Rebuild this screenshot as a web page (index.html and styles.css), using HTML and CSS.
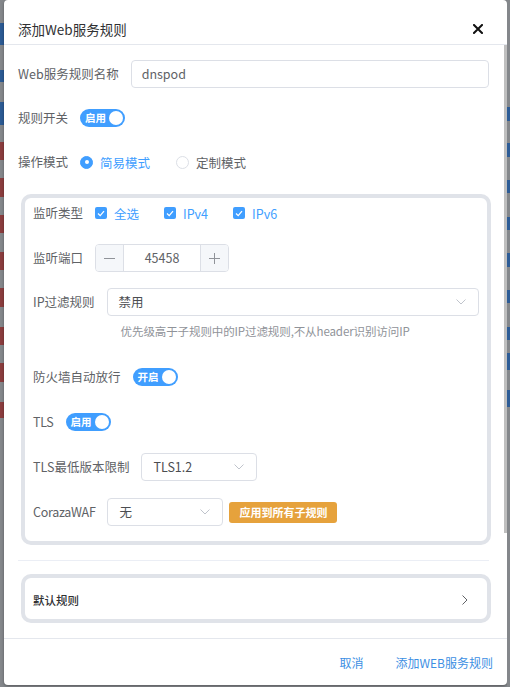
FILE: index.html
```html
<!DOCTYPE html>
<html lang="zh-CN">
<head>
<meta charset="utf-8">
<title>添加Web服务规则</title>
<link rel="stylesheet" href="styles.css">
</head>
<body>
<div class="page">
  <div class="bg-left"></div>
  <div class="dialog">
    <div class="dlg-header">
      <span class="dlg-title">添加Web服务规则</span>
      <span class="close" aria-label="close">
        <svg width="10" height="10" viewBox="0 0 10 10"><path d="M1 1 L9 9 M9 1 L1 9" stroke="#111" stroke-width="2" stroke-linecap="square" fill="none"/></svg>
      </span>
    </div>
    <div class="body-wrap">
      <div class="dlg-body">
        <div class="form-item">
          <span class="lbl">Web服务规则名称</span>
          <div class="input">dnspod</div>
        </div>
        <div class="form-item">
          <span class="lbl">规则开关</span>
          <span class="switch"><span class="sw-text">启用</span><span class="knob"></span></span>
        </div>
        <div class="form-item">
          <span class="lbl">操作模式</span>
          <span class="radio checked"><span class="r-dot"></span><span class="r-text">简易模式</span></span>
          <span class="radio"><span class="r-dot"></span><span class="r-text">定制模式</span></span>
        </div>

        <div class="card">
          <div class="c-item">
            <span class="lbl">监听类型</span>
            <span class="cbx"><span class="box"><svg width="8" height="7" viewBox="0 0 8 7"><path d="M1 3.5 L3.2 5.6 L7 1.2" stroke="#fff" stroke-width="1.3" fill="none"/></svg></span><span class="cbx-text">全选</span></span>
            <span class="cbx"><span class="box"><svg width="8" height="7" viewBox="0 0 8 7"><path d="M1 3.5 L3.2 5.6 L7 1.2" stroke="#fff" stroke-width="1.3" fill="none"/></svg></span><span class="cbx-text">IPv4</span></span>
            <span class="cbx"><span class="box"><svg width="8" height="7" viewBox="0 0 8 7"><path d="M1 3.5 L3.2 5.6 L7 1.2" stroke="#fff" stroke-width="1.3" fill="none"/></svg></span><span class="cbx-text">IPv6</span></span>
          </div>
          <div class="c-item">
            <span class="lbl">监听端口</span>
            <div class="num">
              <span class="num-btn minus"><svg width="11" height="11" viewBox="0 0 11 11"><path d="M0 5.5 H11" stroke="#909399" stroke-width="1"/></svg></span>
              <span class="num-val">45458</span>
              <span class="num-btn plus"><svg width="11" height="11" viewBox="0 0 11 11"><path d="M0 5.5 H11 M5.5 0 V11" stroke="#909399" stroke-width="1"/></svg></span>
            </div>
          </div>
          <div class="c-item ip">
            <span class="lbl">IP过滤规则</span>
            <div class="ctrl-col">
              <div class="select wide"><span class="sel-val">禁用</span><svg class="chev" width="10" height="6" viewBox="0 0 10 6"><path d="M0.5 0.5 L5 5 L9.5 0.5" stroke="#c0c4cc" stroke-width="1" fill="none"/></svg></div>
              <div class="hint">优先级高于子规则中的IP过滤规则,不从header识别访问IP</div>
            </div>
          </div>
          <div class="c-item fw">
            <span class="lbl">防火墙自动放行</span>
            <span class="switch"><span class="sw-text">开启</span><span class="knob"></span></span>
          </div>
          <div class="c-item">
            <span class="lbl lat">TLS</span>
            <span class="switch"><span class="sw-text">启用</span><span class="knob"></span></span>
          </div>
          <div class="c-item">
            <span class="lbl">TLS最低版本限制</span>
            <div class="select short"><span class="sel-val">TLS1.2</span><svg class="chev" width="10" height="6" viewBox="0 0 10 6"><path d="M0.5 0.5 L5 5 L9.5 0.5" stroke="#c0c4cc" stroke-width="1" fill="none"/></svg></div>
          </div>
          <div class="c-item">
            <span class="lbl lat">CorazaWAF</span>
            <div class="select short"><span class="sel-val">无</span><svg class="chev" width="10" height="6" viewBox="0 0 10 6"><path d="M0.5 0.5 L5 5 L9.5 0.5" stroke="#c0c4cc" stroke-width="1" fill="none"/></svg></div>
            <span class="warn-btn">应用到所有子规则</span>
          </div>
        </div>

        <div class="divider"></div>

        <div class="rule-card">
          <span class="rule-title">默认规则</span>
          <svg width="6" height="10" viewBox="0 0 6 10"><path d="M0.5 0.5 L5 5 L0.5 9.5" stroke="#606266" stroke-width="1" fill="none"/></svg>
        </div>
      </div>
      <div class="scroll-thumb"></div>
    </div>
    <div class="dlg-footer">
      <span class="txt-btn">取消</span>
      <span class="txt-btn">添加WEB服务规则</span>
    </div>
  </div>
  <div class="bg-right"></div>
</div>
</body>
</html>
```
FILE: styles.css
```css
* { box-sizing: border-box; }
html, body { margin: 0; padding: 0; }
body {
  width: 510px;
  height: 687px;
  overflow: hidden;
  background: #84878b;
  font-family: "Noto Sans CJK SC", "Noto Sans", sans-serif;
  color: #606266;
}
.page { display: flex; height: 687px; }

.bg-left {
  width: 4px;
  flex: none;
  background: linear-gradient(to bottom,
    #84878b 0 23px, #2c5b94 23px 45px, #84878b 45px 70px, #2c5b94 70px 82px,
    #84878b 82px 102px, #2c5b94 102px 125px, #84878b 125px 142px,
    #8b3d3e 142px 160px, #84878b 160px 178px, #8b3d3e 178px 197px,
    #84878b 197px 215px, #8b3d3e 215px 233px, #84878b 233px 252px,
    #8b3d3e 252px 270px, #84878b 270px 288px, #8b3d3e 288px 307px,
    #84878b 307px 327px, #8b3d3e 327px 345px, #84878b 345px 363px,
    #8b3d3e 363px 382px, #84878b 382px 402px, #8b3d3e 402px 418px,
    #84878b 418px);
}
.bg-right {
  flex: 1;
  background: linear-gradient(to bottom,
    #84878b 0 107px, #2d5c96 107px 121px, #84878b 121px 143px, #2d5c96 143px 157px,
    #84878b 157px 180px, #2d5c96 180px 193px, #84878b 193px 217px, #2d5c96 217px 230px,
    #84878b 230px 253px, #2d5c96 253px 267px, #84878b 267px 290px, #2d5c96 290px 303px,
    #84878b 303px 327px, #2d5c96 327px 340px, #84878b 340px 353px, #2d5c96 353px 370px,
    #84878b 370px 390px, #2d5c96 390px 407px, #84878b 407px);
}

.dialog {
  width: 503px;
  flex: none;
  height: 685px;
  background: #fff;
  border-radius: 4px;
  display: flex;
  flex-direction: column;
  box-shadow: 0 1px 3px rgba(0, 0, 0, 0.35);
  overflow: hidden;
}

.dlg-header {
  height: 45px;
  flex: none;
  border-bottom: 1px solid #e4e7ed;
  display: flex;
  align-items: center;
  justify-content: space-between;
  padding: 14px 24px 0 14px;
}
.dlg-title { font-size: 13.5px; color: #303133; line-height: 20px; }
.close { display: flex; width: 10px; height: 10px; }

.body-wrap {
  flex: 1;
  position: relative;
  overflow: hidden;
}
.dlg-body {
  height: 100%;
  overflow: hidden;
  padding: 15px 18px 0 14px;
}
.scroll-thumb {
  position: absolute;
  top: 0;
  right: 0;
  width: 3px;
  height: 488px;
  background: #bfbfbf;
}

.form-item {
  display: flex;
  align-items: center;
  height: 28px;
  margin-bottom: 16px;
}
.form-item:nth-child(3) { margin-bottom: 0; }
.lbl {
  font-size: 12.5px;
  color: #606266;
  padding-right: 12px;
  white-space: nowrap;
  flex: none;
  line-height: 28px;
}
.lbl.lat { letter-spacing: -0.3px; }

.input {
  flex: 1;
  height: 28px;
  border: 1px solid #dcdfe6;
  border-radius: 4px;
  padding: 0 10px;
  font-size: 12.5px;
  line-height: 26px;
  color: #606266;
}

.switch {
  display: inline-flex;
  align-items: center;
  justify-content: space-between;
  width: 45px;
  height: 18px;
  border-radius: 9px;
  background: #409eff;
  padding: 0 2px 0 5px;
  flex: none;
}
.sw-text { color: #fff; font-size: 10.5px; font-weight: 700; line-height: 18px; }
.knob { width: 14px; height: 14px; border-radius: 50%; background: #fff; }

.radio { display: inline-flex; align-items: center; margin-right: 26px; }
.r-dot {
  width: 13px; height: 13px; border-radius: 50%;
  border: 1px solid #dcdfe6; background: #fff;
  display: flex; align-items: center; justify-content: center;
}
.radio.checked .r-dot { background: #409eff; border-color: #409eff; }
.radio.checked .r-dot::after {
  content: ""; width: 4px; height: 4px; border-radius: 50%; background: #fff;
}
.r-text { font-size: 12.5px; margin-left: 7px; color: #606266; }
.radio.checked .r-text { color: #409eff; }

.card {
  border: 4px solid #e0e3e9;
  border-radius: 10px;
  margin: 18px -2px 0 3px;
  padding: 1px 8px 15px 8px;
}
.c-item {
  display: flex;
  align-items: center;
  height: 28px;
  margin-top: 17px;
}
.c-item:first-child { margin-top: 0; }
.c-item.ip { height: auto; align-items: flex-start; margin-top: 16px; }
.c-item.fw { margin-top: 23px; }

.cbx { display: inline-flex; align-items: center; margin-right: 25px; }
.box {
  width: 12px; height: 12px; border-radius: 2px; background: #409eff;
  display: flex; align-items: center; justify-content: center;
}
.cbx-text { font-size: 12.5px; color: #409eff; margin-left: 7px; }

.num {
  display: flex;
  width: 134px;
  height: 28px;
  border: 1px solid #dcdfe6;
  border-radius: 4px;
  overflow: hidden;
}
.num-btn {
  width: 28px; flex: none; background: #f5f7fa;
  display: flex; align-items: center; justify-content: center;
}
.minus { border-right: 1px solid #dcdfe6; }
.plus { border-left: 1px solid #dcdfe6; }
.num-val {
  flex: 1; text-align: center; font-size: 12.5px; line-height: 26px; color: #606266;
}

.ctrl-col { flex: 1; display: flex; flex-direction: column; }
.select {
  display: flex;
  align-items: center;
  justify-content: space-between;
  height: 28px;
  border: 1px solid #dcdfe6;
  border-radius: 4px;
  padding: 0 12px 0 11px;
  flex: none;
}
.select.short { width: 116px; }
.sel-val { font-size: 12.5px; color: #4b4d51; line-height: 26px; }
.hint {
  font-size: 11.5px;
  color: #909399;
  line-height: 18px;
  margin-top: 6px;
  padding-left: 14px;
  letter-spacing: -0.1px;
}

.warn-btn {
  margin-left: 6px;
  height: 21px;
  padding: 0 10px;
  border-radius: 3px;
  background: #e6a23c;
  color: #fff;
  font-size: 11px;
  font-weight: 700;
  line-height: 21px;
  white-space: nowrap;
}

.divider { height: 1px; background: #ebeef5; margin-top: 15px; }

.rule-card {
  margin: 13px -2px 0 3px;
  height: 49px;
  border: 4px solid #e0e3e9;
  border-radius: 10px;
  display: flex;
  align-items: center;
  justify-content: space-between;
  padding: 2px 19px 0 8px;
}
.rule-title { font-size: 11.5px; color: #303133; font-weight: 500; }

.dlg-footer {
  height: 47px;
  flex: none;
  border-top: 1px solid #e4e7ed;
  display: flex;
  align-items: center;
  justify-content: flex-end;
  gap: 32px;
  padding-right: 14px;
}
.txt-btn { font-size: 12px; color: #3d8fe3; }
```
